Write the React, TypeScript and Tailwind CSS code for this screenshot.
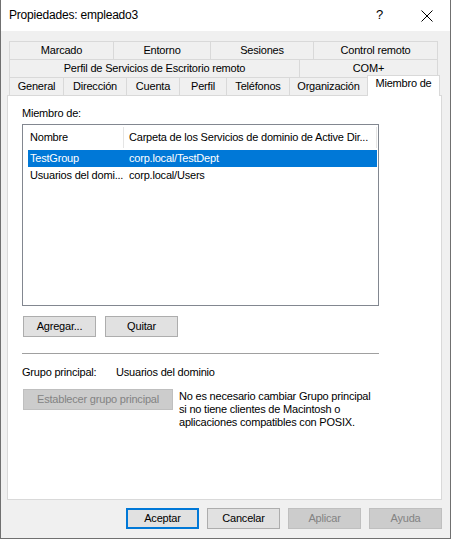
import React from "react";

const font = "font-['Liberation_Sans',Arial,sans-serif]";

function Tab({ w, label }: { w: number; label: string }) {
  return (
    <div
      style={{ width: w }}
      className="h-[18px] shrink-0 border-t border-l border-[#d9d9d9] last:border-r bg-[#f0f0f0] flex items-center justify-center leading-[13px] text-black whitespace-nowrap"
    >
      {label}
    </div>
  );
}

function Btn({
  label,
  w = 73,
  disabled = false,
  isDefault = false,
}: {
  label: string;
  w?: number;
  disabled?: boolean;
  isDefault?: boolean;
}) {
  const base =
    "h-[21px] shrink-0 flex items-center justify-center leading-[13px] whitespace-nowrap";
  const cls = disabled
    ? "bg-[#cccccc] border border-[#bfbfbf] text-[#838383]"
    : isDefault
    ? "bg-[#e1e1e1] border-2 border-[#0078d7] text-black"
    : "bg-[#e1e1e1] border border-[#adadad] text-black";
  return (
    <div style={{ width: w }} className={`${base} ${cls}`}>
      {label}
    </div>
  );
}

export default function App() {
  return (
    <div
      className={`w-[451px] h-[539px] bg-[#f0f0f0] border-l border-r border-b border-[#707070] flex flex-col ${font} text-[11px] tracking-[-0.2px] text-black`}
    >
      {/* Title bar */}
      <div className="h-[31px] shrink-0 bg-white flex items-center pl-[8px] relative">
        <span className="text-[12px] leading-[15px] text-black">
          Propiedades: empleado3
        </span>
        <span className="absolute left-[375px] top-[7px] text-[13px] leading-[16px] text-black">
          ?
        </span>
        <svg
          className="absolute left-[420px] top-[10px]"
          width="12"
          height="12"
          viewBox="0 0 12 12"
        >
          <path d="M0.5 0.5 L11.5 11.5 M11.5 0.5 L0.5 11.5" stroke="#000" strokeWidth="1" fill="none" />
        </svg>
      </div>

      {/* Body */}
      <div className="flex flex-col pl-[6px] pr-[8px] pt-[10px]">
        {/* Tabs */}
        <div className="flex flex-col pl-[2px]">
          <div className="flex">
            <Tab w={104} label="Marcado" />
            <Tab w={97} label="Entorno" />
            <Tab w={103} label="Sesiones" />
            <Tab w={125} label="Control remoto" />
          </div>
          <div className="flex">
            <Tab w={290} label="Perfil de Servicios de Escritorio remoto" />
            <Tab w={139} label="COM+" />
          </div>
          <div className="flex items-end h-[18px]">
            <Tab w={54} label="General" />
            <Tab w={63} label="Dirección" />
            <Tab w={53} label="Cuenta" />
            <Tab w={47} label="Perfil" />
            <Tab w={63} label="Teléfonos" />
            <div className="w-[78px] h-[18px] shrink-0 border-t border-l border-[#d9d9d9] bg-[#f0f0f0] flex items-center justify-center leading-[13px] whitespace-nowrap">
              Organización
            </div>
            <div className="relative z-10 w-[73px] h-[21px] mb-[-1px] shrink-0 border-t border-l border-r border-[#d9d9d9] bg-white flex items-start justify-center pt-[1px] leading-[13px] whitespace-nowrap">
              Miembro de
            </div>
          </div>
        </div>

        {/* Panel */}
        <div className="w-[435px] h-[405px] bg-white border border-[#d9d9d9] pl-[14px] pt-[11px] flex flex-col">
          <div className="h-[13px] leading-[13px]">Miembro de:</div>

          {/* List view */}
          <div className="mt-[4px] w-[357px] h-[182px] border border-[#828790] bg-white flex flex-col">
            <div className="h-[25px] flex items-center shrink-0">
              <div className="w-[101px] h-[21px] border-r border-[#e5e5e5] flex items-center pl-[7px] leading-[13px]">
                Nombre
              </div>
              <div className="w-[253px] h-[21px] border-r border-[#e5e5e5] flex items-center pl-[5px] leading-[13px] whitespace-nowrap overflow-hidden">
                Carpeta de los Servicios de dominio de Active Dir...
              </div>
            </div>
            <div className="ml-[5px] w-[349px] h-[17px] bg-[#0078d7] text-white flex items-center leading-[13px]">
              <div className="w-[95px] pl-[2px] whitespace-nowrap">TestGroup</div>
              <div className="pl-[6px] whitespace-nowrap">corp.local/TestDept</div>
            </div>
            <div className="ml-[5px] w-[349px] h-[17px] flex items-center leading-[13px]">
              <div className="w-[95px] pl-[2px] whitespace-nowrap">Usuarios del domi...</div>
              <div className="pl-[6px] whitespace-nowrap">corp.local/Users</div>
            </div>
          </div>

          <div className="mt-[10px] ml-[1px] flex gap-[9px]">
            <Btn label="Agregar..." />
            <Btn label="Quitar" />
          </div>

          <div className="mt-[16px] w-[357px] h-px bg-[#a0a0a0]" />

          <div className="mt-[12px] flex h-[13px] leading-[13px]">
            <div className="w-[94px]">Grupo principal:</div>
            <div>Usuarios del dominio</div>
          </div>

          <div className="mt-[10px] ml-[1px] flex items-start gap-[6px]">
            <Btn label="Establecer grupo principal" w={150} disabled />
            <div className="leading-[13px] pt-[1px]">
              No es necesario cambiar Grupo principal
              <br />
              si no tiene clientes de Macintosh o
              <br />
              aplicaciones compatibles con POSIX.
            </div>
          </div>
        </div>

        {/* Bottom buttons */}
        <div className="mt-[8px] flex justify-end gap-[8px]">
          <Btn label="Aceptar" isDefault />
          <Btn label="Cancelar" />
          <Btn label="Aplicar" disabled />
          <Btn label="Ayuda" disabled />
        </div>
      </div>
    </div>
  );
}
